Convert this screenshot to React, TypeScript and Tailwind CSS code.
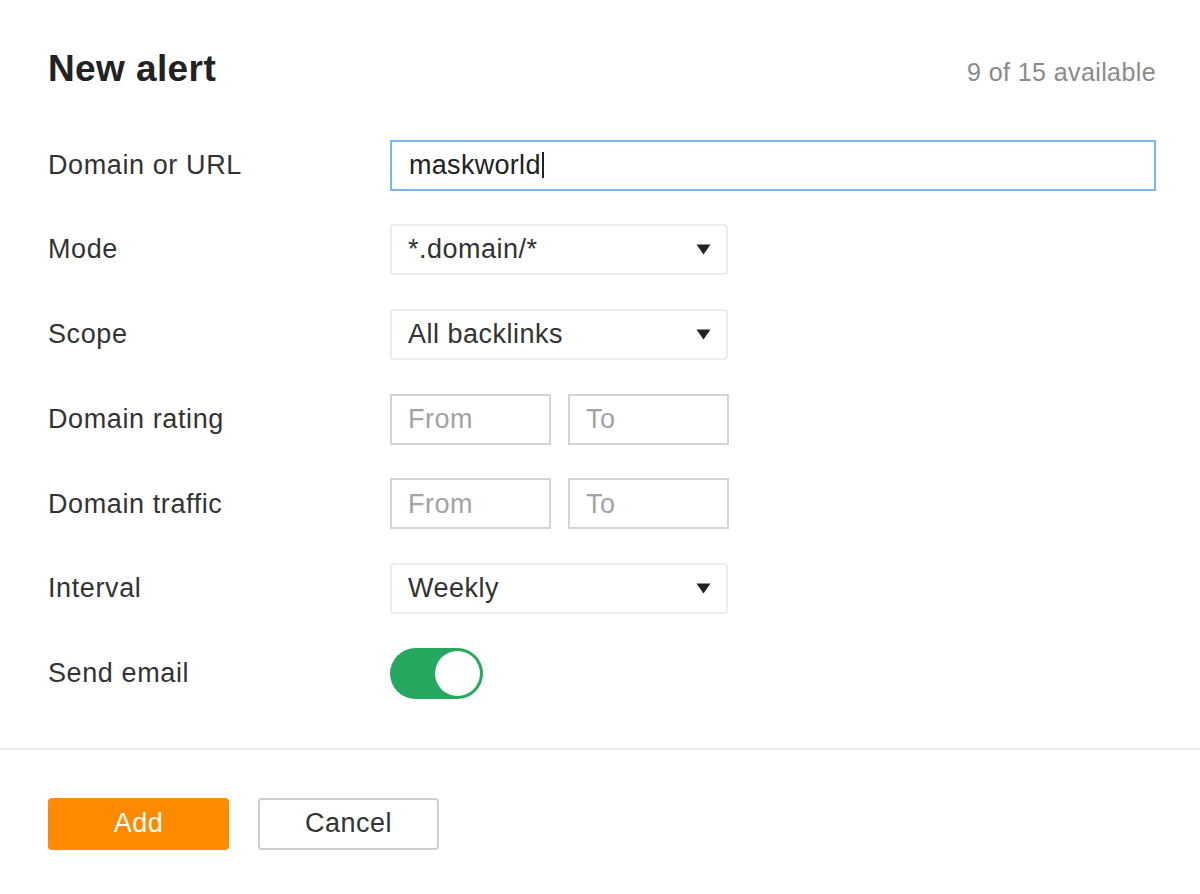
import React from 'react';

const font = { fontFamily: '"Liberation Sans", Arial, sans-serif' };

function Row({ label, children }: { label: string; children: React.ReactNode }) {
  return (
    <div className="flex h-[51px] items-center">
      <div className="w-[342px] shrink-0 text-[27px] tracking-[0.6px] text-[#333]">{label}</div>
      <div className="flex h-full items-center">{children}</div>
    </div>
  );
}

function Select({ value }: { value: string }) {
  return (
    <div className="flex h-[51px] w-[338px] items-center justify-between rounded-[4px] border-2 border-[#ececec] bg-white pl-[16px] pr-[15px] text-[27px] tracking-[0.5px] text-[#333]">
      <span>{value}</span>
      <svg width="15" height="11" viewBox="0 0 15 11" aria-hidden>
        <path d="M0.5 0.5 H14.5 L7.5 10.5 Z" fill="#222" />
      </svg>
    </div>
  );
}

function RangeBox({ placeholder }: { placeholder: string }) {
  return (
    <div className="flex h-[51px] w-[161px] items-center border-2 border-[#d4d4d4] bg-white pl-[16px] text-[27px] tracking-[0.5px] text-[#a3a3a3]">
      {placeholder}
    </div>
  );
}

export default function App() {
  return (
    <div className="min-h-[894px] w-[1200px] bg-white" style={font}>
      <div className="pl-[48px] pr-[44px]">
        {/* header */}
        <div className="flex items-baseline justify-between pt-[47px]">
          <h1 className="text-[37px] font-bold leading-[44px] tracking-[0.4px] text-[#222]">New alert</h1>
          <span className="text-[25px] tracking-[0.4px] text-[#8a8a8a]">9 of 15 available</span>
        </div>

        {/* fields */}
        <div className="mt-[48px] flex flex-col gap-[33.7px]">
          <Row label="Domain or URL">
            <div className="flex h-[51px] w-[766px] items-center border-2 border-[#7ab8ea] bg-white pl-[17px] text-[27px] tracking-[0.3px] text-[#222]">
              maskworld
              <span className="ml-[1px] inline-block h-[26px] w-[2px] bg-[#222]" />
            </div>
          </Row>
          <Row label="Mode">
            <Select value="*.domain/*" />
          </Row>
          <Row label="Scope">
            <Select value="All backlinks" />
          </Row>
          <Row label="Domain rating">
            <div className="flex gap-[17px]">
              <RangeBox placeholder="From" />
              <RangeBox placeholder="To" />
            </div>
          </Row>
          <Row label="Domain traffic">
            <div className="flex gap-[17px]">
              <RangeBox placeholder="From" />
              <RangeBox placeholder="To" />
            </div>
          </Row>
          <Row label="Interval">
            <Select value="Weekly" />
          </Row>
          <Row label="Send email">
            <div className="flex h-[51px] w-[93px] items-center justify-end rounded-full bg-[#27a860] pr-[3px]">
              <div className="h-[45px] w-[45px] rounded-full bg-white" />
            </div>
          </Row>
        </div>
      </div>

      <div className="mt-[49px] h-[2px] w-full bg-[#e8e8e8]" />

      <div className="flex gap-[29px] pl-[48px] pt-[48px]">
        <button className="flex h-[52px] w-[181px] items-center justify-center rounded-[4px] bg-[#ff8a00] text-[27px] tracking-[0.5px] text-white">
          Add
        </button>
        <button className="flex h-[52px] w-[181px] items-center justify-center rounded-[4px] border-2 border-[#cfcfcf] bg-white text-[27px] tracking-[0.5px] text-[#333]">
          Cancel
        </button>
      </div>
    </div>
  );
}
